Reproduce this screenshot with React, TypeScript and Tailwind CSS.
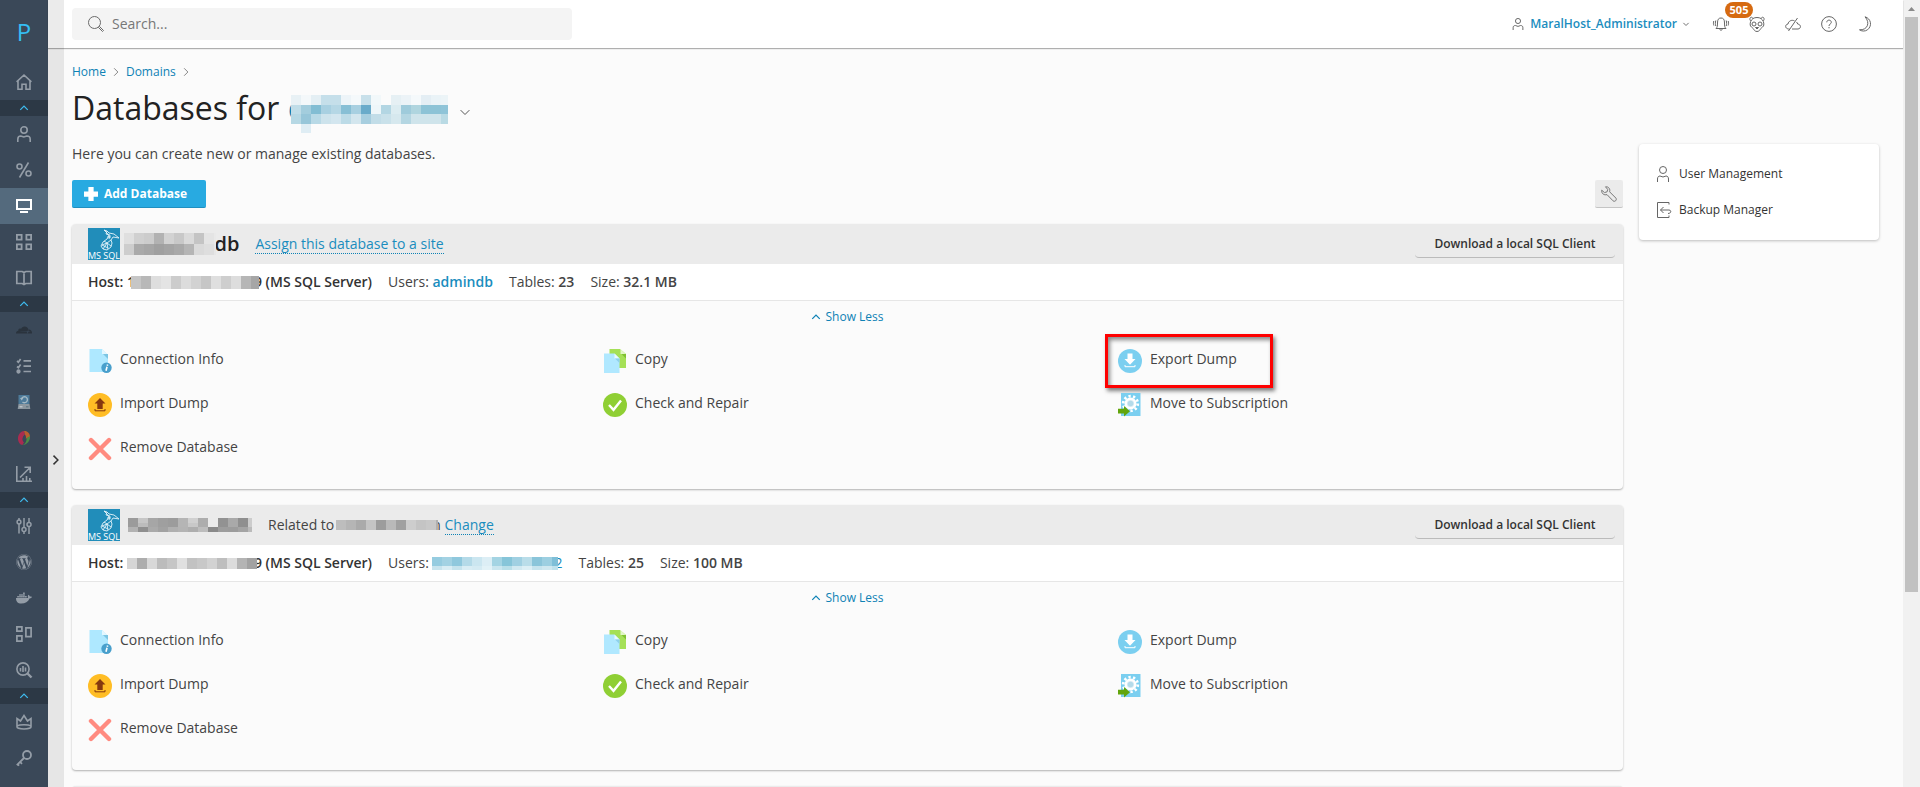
import React from "react"
import { FaDocker, FaWordpress } from "react-icons/fa"
import { SiCloudflare } from "react-icons/si"

type IconProps = { children: React.ReactNode; size?: number; stroke?: number; className?: string }

// --- BASE ICON (16x16 grid) ---
function Icon({ children, size = 16, stroke = 1, className = "" }: IconProps) {
  return (
    <svg
      width={size}
      height={size}
      viewBox="0 0 16 16"
      fill="none"
      stroke="currentColor"
      strokeWidth={stroke}
      className={`shrink-0 overflow-visible ${className}`}
      aria-hidden="true"
    >
      {children}
    </svg>
  )
}

// --- SIDEBAR ---
const navGroups = [
  [{ id: "home", label: "Home", icon: <Icon stroke={1.6}><path d="M.6 7.8 8 1l7.400 6.800M2 7v8.200h4v-5h4v5h4V7" /></Icon> }],
  [
    { id: "customers", label: "Customers", icon: <Icon stroke={1.6}><circle cx="8" cy="4" r="3.200" /><path d="M1.800 16v-2.800c0-2 1.200-3.200 3-3.200l3 1 3-1c2 0 3.400 1.200 3.400 3.200V16" /></Icon> },
    { id: "resellers", label: "Resellers", icon: <Icon stroke={1.6}><circle cx="3.500" cy="4.500" r="2.500" /><circle cx="12.500" cy="11.500" r="2.500" /><path d="M12.500.5 3.500 15.500" /></Icon> },
    { id: "domains", label: "Domains", active: true, icon: <Icon stroke={2}><path d="M1 2h14v9H1zM4 14h8" /></Icon> },
    { id: "subscriptions", label: "Subscriptions", icon: <Icon stroke={1.8}><path d="M.9.9h4.700v4.700H.9zM10.400.9h4.700v4.700h-4.700zM.9 10.400h4.700v4.700H.9zM10.400 10.400h4.700v4.700h-4.700z" /></Icon> },
    { id: "plans", label: "Service Plans", icon: <Icon stroke={1.7}><path d="M.8 1.500h5.400L8 2.600l1.800-1.100h5.400v12H9.800L8 14.600l-1.800-1.100H.8zM8 2.600v12" /></Icon> },
  ],
  [
    { id: "cloudflare", label: "Cloudflare", icon: <SiCloudflare size={16} className="text-[#2a333d]" /> },
    { id: "tasks", label: "Tasks", icon: <Icon stroke={1.700}><path d="m1 3 1.400 1.200L4.600 1M1 8.500l1.400 1.200 2.200-3.200M7.500 2.800H15M7.500 8.200H15M7.500 13.500H15" /><circle cx="2.500" cy="13.500" r="1.300" fill="currentColor" /></Icon> },
    { id: "backup", label: "Backup", icon: <BackupDriveIcon /> },
    { id: "monitor", label: "Monitoring", icon: <DropIcon /> },
    { id: "statistics", label: "Statistics", icon: <Icon stroke={1.600}><path d="M.8 0v15.200H16M4 11.500 13.500 2M8.500 1.200h5.700v5.700M7 15v-3M10.500 15v-5M13.800 15v-3" /></Icon> },
  ],
  [
    { id: "tools", label: "Tools & Settings", icon: <Icon stroke={1.500}><path d="M3 0v2M3 6v9.500M8 0v9M8 14v2M13 0v4.500M13 9v7" /><circle cx="3" cy="4" r="1.900" /><circle cx="8" cy="11.500" r="2" /><circle cx="13" cy="6.500" r="2" /></Icon> },
    { id: "wordpress", label: "WordPress", icon: <FaWordpress size={16} /> },
    { id: "docker", label: "Docker", icon: <FaDocker size={16} /> },
    { id: "extensions", label: "Extensions", icon: <Icon stroke={1.700}><path d="M.9.9h5v4.200h-5zM.9 9.900h5v5.200h-5zM9.900 1.900h5.200v8.700H9.900z" /></Icon> },
    { id: "seo", label: "SEO Toolkit", icon: <Icon stroke={1.600}><circle cx="7" cy="7" r="6.100" /><path d="m11.500 11.500 4 4" strokeWidth="2.400" /><path d="M4.500 9.500V6M7 10V4M9.500 9.500V5.500" /></Icon> },
  ],
  [
    { id: "license", label: "License", icon: <Icon stroke={1.600}><path d="M1 4.500v8.500c0 1 3 2 7 2s7-1 7-2V4.500L11.500 7 8 1.500 4.500 7zM1.500 12c2-1.600 11-1.600 13 0" /></Icon> },
    { id: "keys", label: "Keys", icon: <Icon stroke={1.800}><circle cx="11" cy="5" r="4" /><path d="M8 8 .8 15.200M4 11.800l2 2M1.500 14l1.600 1.600" /></Icon> },
  ],
]

function BackupDriveIcon() {
  return (
    <svg width="16" height="16" viewBox="0 0 16 16" aria-hidden="true">
      <path d="M2.500 1h11v9h-11z" fill="#4d7a99" />
      <path d="M2.500 10h11l.8 5H1.700z" fill="#8c979f" />
      <path d="M5.500 5a3 3 0 1 1 1 3" fill="none" stroke="#a3b8c4" strokeWidth="1.400" />
      <path d="m4 4 1.700 2.500L7.400 4z" fill="#a3b8c4" />
      <path d="M3.500 12.800h3" stroke="#d2d8dc" />
      <path d="M10 12.800h2.500" stroke="#58717e" />
    </svg>
  )
}

function DropIcon() {
  return (
    <svg width="16" height="16" viewBox="0 0 16 16" aria-hidden="true">
      <path d="M8 1C4.500 1.500 2 4.500 2 8.500c0 3.500 2 6.500 4.500 6.500L8 12c-2-1-2-5 1-7.500z" fill="#a92c50" />
      <path d="M8 1c3-.5 6 2 6 6L9 9V4.500z" fill="#b8602f" />
      <path d="M14 6c.5 4.500-3 9-7.500 9 3-1 4-3.500 4.200-7z" fill="#4c8b45" />
      <path d="M9 4.500c1.800 2.500 1 6-1.500 7.500-1.500-2.500-1-5.500 1.500-7.500z" fill="#3a4858" />
    </svg>
  )
}

function Sidebar() {
  return (
    <nav aria-label="Main" className="w-12 shrink-0 overflow-hidden bg-[#3a4858] text-[#949da7]">
      <a href="#" aria-label="Plesk" className="flex h-16 items-center justify-center text-2xl text-[#35bdf2]">P</a>
      {navGroups.map((group, index) => (
        <div key={index}>
          {index > 0 && (
            <button aria-label="Collapse group" className="flex h-4 w-full items-center justify-center bg-[#2c3845] text-[#3fbcf0]">
              <Icon size={10} stroke={2}><path d="m2 11 6-6 6 6" /></Icon>
            </button>
          )}
          {group.map((item: any) => (
            <a
              key={item.id}
              href={`#${item.id}`}
              aria-label={item.label}
              className={`flex h-9 items-center justify-center ${item.active ? "bg-[#546a7d] text-white" : ""}`}
            >
              {item.icon}
            </a>
          ))}
        </div>
      ))}
    </nav>
  )
}

// --- PIXELATED NAMES ---
// One string per row, one colour per cell; "-" leaves the cell empty
function Mosaic({ rows, cell, width, height, className = "" }: { rows: string[]; cell: number; width: number; height: number; className?: string }) {
  const rowHeight = height / rows.length
  return (
    <svg width={width} height={height} shapeRendering="crispEdges" className={`relative z-10 shrink-0 ${className}`} aria-hidden="true">
      {rows.map((row, y) =>
        row.split(" ").map((color, x) =>
          color === "-" ? null : (
            <rect key={`${x}-${y}`} x={x * cell} y={y * rowHeight} width={cell} height={rowHeight} fill={color} />
          )
        )
      )}
    </svg>
  )
}

const titleRows = [
  "#e8f1f5 #f4f8fa #e4eff4 #c5dfea #c5dfea #edf4f8 #f5f9fb #c8e0ea #f2f8fa #fbfbfb #e6f0f4 #ecf3f7 #f5f9fb #e4eef4 #eaf3f7 #ecf4f7",
  "#c0dde8 #a3cddd #82bdd3 #a8d0e1 #b5d7e5 #87bfd5 #a8d0e1 #6aabca #eef6f9 #b3d6e3 #dcecf1 #9fcbdb #afd5df #8dc3d6 #8dc3d6 #8fc4d8",
  "#b6d8e4 #97c6d9 #b8d9e6 #cde3ec #d3e6ef #bcdbe7 #d3e6ee #a7cedf #c2dde8 #c9e1ea #d6e8ee #b4d6e2 #cfe4eb #cfe4eb #cfe4eb #b9dae4",
  "- #dfedf4",
]
const hostRows = [
  "#c6c6c6 #b8b8b8 #dedede #e4e4e4 #cccccc #dcdcdc #d2d2d2 #c6c6c6 #dfdfdf #cecece #dddddd #b6b6b6 #a6a6a6",
]
const hostRowsAlt = [
  "#d6d6d6 #adadad #d8d8d8 #bcbcbc #c6c6c6 #e0e0e0 #c2c2c2 #c8c8c8 #d2d2d2 #bebebe #dcdcdc #b4b4b4 #a2a2a2",
]
const userRows = [
  "#96cce0 #a3d2e3 #8fc8dd #b4dae8 #cbe6f0 #dceef5 #a4d4e3 #86c5d9 #a0d0e2 #b9dde9 #8ac5da #9ccfe1 #7fbfd8",
  "#96cce0 #a3d2e3 #8fc8dd #b4dae8 #cbe6f0 #dceef5 #a4d4e3 #86c5d9 #a0d0e2 #b9dde9 #8ac5da #9ccfe1 #7fbfd8",
  "#c8e4ee #d9edf4 #c5e3ed #d9edf4 #d5ebf3 #e2f2f7 #cae6ef #b9dfe9 #d1e9f1 #dceff5 #c6e4ee #cfe8f0 #bfe1ec",
]

// --- ACTION ICONS (24x24) ---
const actionIcons = {
  info: (
    <>
      <path d="M1.500 0H14l6 6v17H1.500z" fill="#aee8ff" />
      <path d="M14 0v5h5z" fill="#e3f7ff" />
      <path d="M15 5h5v5z" fill="#7bc4e2" />
      <circle cx="18.500" cy="18.800" r="5.200" fill="#489fcc" />
      <path d="m19.600 15.500-.3 1.200M19 17.700l-1 4" stroke="#fff" strokeWidth="1.600" />
    </>
  ),
  copy: (
    <>
      <path d="M6.500 0H17l6 5v14H6.500z" fill="#a5e057" />
      <path d="M17.500 0v5h5z" fill="#e1f6c7" />
      <path d="M18.500 5H23v4.500z" fill="#7fc132" />
      <path d="M1 4.500h10.500l5 5V24H1z" fill="#b0e8ff" />
      <path d="M11.500 4.500v5h5z" fill="#e8f9ff" />
      <path d="M12 9.500h4.500V14z" fill="#8dd0ec" />
    </>
  ),
  export: (
    <>
      <circle cx="12" cy="12" r="12" fill="#7bcff0" />
      <path d="M9.500 4.500h5v5.500h3L12 15.700 6.500 10h3z" fill="#fff" />
      <path d="M7 16v1.700h10V16" fill="none" stroke="#fff" />
    </>
  ),
  import: (
    <>
      <circle cx="12" cy="12" r="12" fill="#ffbd25" />
      <path d="M12 5 6.500 10.500h2.800v5.500h5.400v-5.500h2.800z" fill="#85380f" />
      <path d="M7 16v1.800h10V16" fill="none" stroke="#85380f" />
    </>
  ),
  check: (
    <>
      <circle cx="12" cy="12" r="12" fill="#8fcf34" />
      <path d="m6 12 4.500 4.800 7.500-9.300" fill="none" stroke="#fff" strokeWidth="2.400" />
    </>
  ),
  move: (
    <>
      <path d="M3 0h19.500v23H3z" fill="#7bcff0" />
      <circle cx="12.500" cy="10.500" r="7.300" fill="none" stroke="#fff" strokeWidth="2.800" strokeDasharray="2.300 2.286" />
      <circle cx="12.500" cy="10.500" r="4.800" fill="#ddeef5" stroke="#fff" strokeWidth="2.400" />
      <circle cx="12.500" cy="10.500" r="2.800" fill="#b4dbea" />
      <path d="M0 15.800h6V13l6 5.200-6 5.300v-3H0z" fill="#62a50c" />
    </>
  ),
  remove: <path d="M3 3 21 21M21 3 3 21" stroke="#ff8b80" strokeWidth="4.400" strokeLinecap="round" />,
}

const actions: { label: string; icon: keyof typeof actionIcons }[] = [
  { label: "Connection Info", icon: "info" },
  { label: "Copy", icon: "copy" },
  { label: "Export Dump", icon: "export" },
  { label: "Import Dump", icon: "import" },
  { label: "Check and Repair", icon: "check" },
  { label: "Move to Subscription", icon: "move" },
  { label: "Remove Database", icon: "remove" },
]

function MsSqlLogo() {
  return (
    <svg width="32" height="32" viewBox="0 0 32 32" className="shrink-0" role="img" aria-label="MS SQL">
      <path d="M0 0h32v32H0z" fill="#218dba" />
      <g fill="none" stroke="#e6f4f9" strokeWidth=".9">
        <path d="m16 2 3 1 2 2 5 1 5 4-6-1-2 3 1 3-1 4-4 3-4-1-2-3 2-4 4-3 2-3-2-3z" />
        <path d="m19 3-1 3 4 1-1 4M19 9l4 0M16 13l3 2 4-3M14 17l5-2 4 3M15 21l4-6 1 6M14 17l6 3" />
      </g>
      <text x="16" y="30.500" textAnchor="middle" fontSize="9" fill="#fff">MS SQL</text>
    </svg>
  )
}

// --- DATABASE PANEL ---
function DatabasePanel({ title, relation, host, user, tables, size, highlight }: {
  title: React.ReactNode
  relation: React.ReactNode
  host: React.ReactNode
  user: React.ReactNode
  tables: string
  size: string
  highlight?: string
}) {
  return (
    <section className="rounded-sm bg-[#fbfbfb] shadow-[0_1px_2px_rgba(0,0,0,0.3)]">
      <div className="flex h-10 items-center rounded-t-sm bg-[#ebebeb] pr-2 pl-4">
        <MsSqlLogo />
        <h2 className="flex items-center text-xl font-semibold text-[#222]">{title}</h2>
        <div className="ml-4 flex flex-1 items-center">{relation}</div>
        <button className="h-7 w-[200px] rounded-sm border-b border-[#bbb] text-xs font-semibold text-[#333]">
          Download a local SQL Client
        </button>
      </div>

      <div className="flex h-[37px] items-center gap-4 border-b border-[#e6e6e6] bg-white px-4">
        <span className="flex items-center font-semibold text-[#333]">Host:&nbsp;{host}&nbsp;(MS SQL Server)</span>
        <span className="flex items-center">Users:&nbsp;{user}</span>
        <span>Tables: <b className="font-semibold">{tables}</b></span>
        <span>Size: <b className="font-semibold">{size}</b></span>
      </div>

      <div className="px-4 pt-2 pb-7">
        <button className="mx-auto flex h-4 items-center gap-1 text-xs text-[#0e82b5]">
          <Icon size={10} stroke={2}><path d="m2 11 6-6 6 6" /></Icon>
          Show Less
        </button>
        <ul className="mt-6 grid grid-cols-3 gap-x-[26px] gap-y-5">
          {actions.map((action) => (
            <li key={action.label} className="flex">
              <a href="#" className="relative flex h-6 gap-2">
                <svg width="24" height="24" viewBox="0 0 24 24" className="shrink-0" aria-hidden="true">
                  {actionIcons[action.icon]}
                </svg>
                {action.label}
                {highlight === action.label && (
                  <span className="absolute -top-[15px] -left-[13px] h-[54px] w-[168px] border-3 border-[#fe0000] shadow-[2px_3px_4px_rgba(0,0,0,0.5),inset_2px_3px_4px_rgba(0,0,0,0.45)]" />
                )}
              </a>
            </li>
          ))}
        </ul>
      </div>
    </section>
  )
}

const dottedLink = "border-b border-dotted border-[#0e82b5] leading-[18px] text-[#1a8dbe]"

// --- TOP BAR ---
function TopBar() {
  return (
    <header className="relative z-20 flex h-12 shrink-0 items-center bg-white pr-[30px] shadow-[0_1px_1px_rgba(0,0,0,0.3)]">
      <div className="h-full w-4 bg-[#ebebeb]" />
      <label className="ml-2 flex h-8 w-[500px] items-center gap-2 rounded bg-[#f4f4f4] pl-4 text-[#6b6b6b]">
        <Icon><circle cx="6.500" cy="6.500" r="6" /><path d="m10.500 11.500 1-1 4 4-1 1z" /></Icon>
        <input type="search" aria-label="Search" placeholder="Search..." className="w-full bg-transparent outline-none placeholder:text-[#777]" />
      </label>

      <div className="ml-auto flex items-center text-[#666]">
        <button className="flex items-center gap-1.5 text-xs font-semibold text-[#1a8dbe]">
          <Icon size={12} stroke={1.300} className="text-[#666]"><circle cx="8" cy="4" r="3.400" /><path d="M1.500 16v-3c0-2 1-3 3-3L8 11.200l3.500-1.200c2 0 3 1 3 3v3" /></Icon>
          MaralHost_Administrator
          <Icon size={6} stroke={2.500} className="text-[#666]"><path d="m1 5 7 7 7-7" /></Icon>
        </button>
        <div className="ml-6 flex items-center gap-5">
          <button aria-label="Notifications" className="relative">
            <Icon><path d="M3 12.500h10c-1.300-1.200-1.500-2.500-1.500-5.500C11.500 3.500 10.500 2 8 2S4.500 3.500 4.500 7c0 3-.2 4.300-1.500 5.500zM6.800 12.500c0 2.500 2.400 2.500 2.400 0M2.800 4.500c-.6 2-.6 4 0 5.500M13.200 4.500c.6 2 .6 4 0 5.500M.8 5c-.5 1.500-.5 3 0 4.500M15.200 5c.5 1.500.5 3 0 4.500" /></Icon>
            <span className="absolute -top-[14px] left-3 z-10 h-4 w-7 rounded-full bg-[#d66a10] text-center text-[11px] leading-4 font-bold text-white">505</span>
          </button>
          <button aria-label="Panda">
            <Icon><path d="M4 2.500c2-1.300 6-1.300 8 0M4 2.500C2.500-.3-.3 2 1.500 4.800M12 2.500c1.500-2.800 4.300-.5 2.500 2.300" /><path d="M4 2.500C1.800 4.200 1 6.500 1.200 9c.2 1.800 2 2.300 3 3.500.8 1.200 1.500 3 3.800 3s3-1.800 3.800-3c1-1.200 2.800-1.700 3-3.500.2-2.500-.6-4.800-2.800-6.500" /><circle cx="5" cy="8" r="2" /><circle cx="11" cy="8" r="2" /><path d="M6.500 11.500h3L8 13z" fill="currentColor" /></Icon>
          </button>
          <button aria-label="Cloud status">
            <Icon><path d="M4.500 13h-1C-.2 12.500-.2 8.500 3 8c.5-3 3.500-4.500 6.500-3.200M11.500 6c.6.7 1 1.300 1.200 2 3.600.5 3.600 4.700.3 5H7M3.500 15l9-13" /></Icon>
          </button>
          <button aria-label="Help">
            <Icon><circle cx="8" cy="8" r="7.400" /><path d="M5.800 6.300c0-3 4.500-2.800 4.500 0C10.300 8 8 8 8 10M8 11v1.300" /></Icon>
          </button>
          <button aria-label="Dark mode">
            <Icon><path d="M8 .8c6 1.700 7.500 9 2.500 13-2.500 1.800-6 1.500-8 0 8 .5 11-7 5.500-13z" /></Icon>
          </button>
        </div>
      </div>
    </header>
  )
}

const crumbArrow = <Icon size={10} className="text-[#888]" stroke={1.600}><path d="m5 2 6 6-6 6" /></Icon>

function Scrollbar() {
  return (
    <div className="flex w-[17px] shrink-0 flex-col items-center bg-[#f1f1f1]" aria-hidden="true">
      <svg width="17" height="17" viewBox="0 0 17 17" className="shrink-0"><path d="m5 11 3.500-4 3.500 4z" fill="#8a8a8a" /></svg>
      <div className="h-[73%] w-[13px] bg-[#c1c1c1]" />
    </div>
  )
}

export default function App() {
  return (
    <div className="flex h-screen overflow-hidden bg-[#fbfbfb] font-['Open_Sans',sans-serif] text-sm text-[#444]">
      <Sidebar />

      <div className="flex min-w-0 flex-1 flex-col">
        <TopBar />

        <div className="flex min-h-0 flex-1">
          <button aria-label="Expand sidebar" className="flex w-4 shrink-0 items-center justify-center bg-[#e6e6e6] pt-[85px] text-[#333]">
            <Icon size={10} stroke={2.400}><path d="m4 1 7 7-7 7" /></Icon>
          </button>

          <div className="flex min-w-0 flex-1 gap-4 overflow-hidden pr-6 pl-2">
            <main className="min-w-0 flex-1 pt-4">
              <div className="flex h-4 items-center gap-[5px] text-xs text-[#0e82b5]">
                <a href="#home">Home</a>
                {crumbArrow}
                <a href="#domains">Domains</a>
                {crumbArrow}
              </div>

              <h1 className="mt-2 flex h-10 items-center text-[32px] leading-10 text-[#222]">
                Databases for&nbsp;
                <span className="text-[#0e82b5]">c</span>
                <Mosaic rows={titleRows} cell={10} width={157} height={38} className="-ml-3 mt-3" />
                <button aria-label="Switch domain" className="mt-2 ml-3 text-[#555]">
                  <Icon size={10} stroke={1.600}><path d="m1 5 7 7 7-7" /></Icon>
                </button>
              </h1>

              <p className="mt-4">Here you can create new or manage existing databases.</p>

              <div className="mt-4 flex justify-between">
                <button className="flex h-7 w-[134px] items-center gap-1.5 rounded-xs border-b border-[#1f8fc0] bg-[#28aae1] pl-3 text-xs font-bold text-white">
                  <Icon size={14} stroke={6}><path d="M8 0v16M0 8h16" /></Icon>
                  Add Database
                </button>
                <button aria-label="Settings" className="flex size-7 items-center justify-center rounded-xs border-b border-[#c4c4c4] bg-[#ebebeb] text-[#777]">
                  <Icon><path d="M4.500.8C7.500.3 9.500 3 8.600 5.800l6.200 6.200c1.600 1.800-1 4.400-2.800 2.800L6 8.600C3 9.500.3 7.500.7 4.200L3.500 6.600l2.600-.8.600-2.400z" /></Icon>
                </button>
              </div>

              <div className="mt-4 space-y-4">
                <DatabasePanel
                  title={
                    <>
                      <Mosaic
                        className="ml-1"
                        cell={10}
                        width={92}
                        height={22}
                        rows={[
                          "#dfdfdf #d0d0d0 #cccccc #b2b2b2 #d2d2d2 #c8c8c8 #dadada #c4c4c4 #e4e4e4 #e9e9e9",
                          "#cdcdcd #aaaaaa #a6a6a6 #a0a0a0 #a4a4a4 #a9a9a9 #b5b5b5 #dadada #dedede #e6e6e6",
                        ]}
                      />
                      <span className="-ml-2.5">_db</span>
                    </>
                  }
                  relation={<a href="#assign" className={dottedLink}>Assign this database to a site</a>}
                  host={<>1<Mosaic rows={hostRows} cell={10} width={128} height={13} className="-ml-1" /><span className="-ml-[5px]">9</span></>}
                  user={<a href="#user" className="font-semibold text-[#1a8dbe]">admindb</a>}
                  tables="23"
                  size="32.1 MB"
                  highlight="Export Dump"
                />
                <DatabasePanel
                  title={
                    <Mosaic
                      className="ml-2"
                      cell={10}
                      width={124}
                      height={14}
                      rows={[
                        "#9b9b9b #c6c6c6 #a6a6a6 #9f9f9f #9c9c9c #b5b5b5 #d0d0d0 #adadad - #929292 #a9a9a9 #8f8f8f #cccccc",
                        "#9b9b9b #bcbcbc #a6a6a6 #9f9f9f #9c9c9c #b5b5b5 #c8c8c8 #adadad - #929292 #a9a9a9 #8f8f8f #cccccc",
                        "#b2b2b2 #8f8f8f #aaaaaa #a2a2a2 #b0b0b0 #b4b4b4 #aeaeae #bdbdbd #8a8a8a #9d9d9d #9c9c9c #a4a4a4 #bbbbbb",
                      ]}
                    />
                  }
                  relation={
                    <>
                      Related to
                      <Mosaic
                        className="ml-0.5"
                        cell={10}
                        width={102}
                        height={10}
                        rows={["#bdbdbd #b5b5b5 #aaaaaa #c4c4c4 #9c9c9c #b9b9b9 #a0a0a0 #cdcdcd #c4c4c4 #c8c8c8 #b0b0b0"]}
                      />
                      <span className="-ml-1.5">n</span>&nbsp;
                      <a href="#change" className={dottedLink}>Change</a>
                    </>
                  }
                  host={<><Mosaic rows={hostRowsAlt} cell={10} width={131} height={11} /><span className="-ml-1">9</span></>}
                  user={<a href="#user2" aria-label="Database user" className="flex items-center text-[#1a8dbe]"><Mosaic rows={userRows} cell={10} width={126} height={13} /><span className="-ml-1">2</span></a>}
                  tables="25"
                  size="100 MB"
                />
                <section className="h-10 rounded-sm bg-[#ebebeb] shadow-[0_1px_2px_rgba(0,0,0,0.3)]" />
              </div>
            </main>

            <aside className="mt-24 h-24 w-60 shrink-0 rounded bg-white px-4 py-3 shadow-[0_1px_3px_rgba(0,0,0,0.25)]">
              <a href="#users" className="flex h-9 items-center gap-2 text-xs text-[#333]">
                <Icon className="text-[#666]"><circle cx="8" cy="4" r="3.500" /><path d="M2.500 16v-3c0-2 1-3 2.500-3l3 1 3-1c1.500 0 2.500 1 2.500 3v3" /></Icon>
                User Management
              </a>
              <a href="#backups" className="flex h-9 items-center gap-2 text-xs text-[#333]">
                <Icon className="text-[#666]"><path d="M14 2.500V.5H2.500v15H14v-2M8.500 5 5.500 8l3 3M5.500 8H14c2.500 0 2.500 3.500-1 3.500" /></Icon>
                Backup Manager
              </a>
            </aside>
          </div>
        </div>
      </div>

      <Scrollbar />
    </div>
  )
}
